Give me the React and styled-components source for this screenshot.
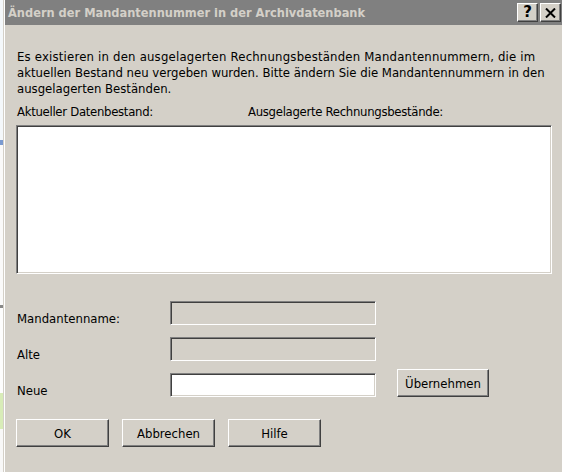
import React from 'react';
import styled, { createGlobalStyle } from 'styled-components';

const GlobalStyle = createGlobalStyle`
  html, body {
    margin: 0;
    padding: 0;
    background: #fff;
    overflow: hidden;
  }
  * {
    box-sizing: border-box;
  }
`;

const FONT = `'DejaVu Sans Condensed', 'DejaVu Sans', Tahoma, sans-serif`;

const Screen = styled.div`
  display: flex;
  width: 562px;
  height: 472px;
  font-family: ${FONT};
  font-stretch: condensed;
  font-size: 13px;
  color: #000;
`;

const Backdrop = styled.div`
  display: flex;
  flex-direction: column;
  width: 3px;
  background: #f4f8fb;
`;

const Patch = styled.div`
  height: ${(p) => p.h}px;
  background: ${(p) => p.color};
`;

const Window = styled.div`
  flex: 1;
  display: flex;
  flex-direction: column;
  min-width: 0;
  background: #d4d0c8;
  border-left: 1px solid #d4d0c8;
  box-shadow: inset 1px 0 #fff;
  padding-left: 1px;
`;

const TitleBar = styled.div`
  display: flex;
  align-items: center;
  height: 25px;
  padding: 0 1px 0 3px;
  background: #808080;
`;

const Title = styled.div`
  flex: 1;
  font-weight: bold;
  font-size: 12.7px;
  color: #d4d0c8;
  white-space: nowrap;
`;

const CaptionButton = styled.div`
  display: flex;
  align-items: center;
  justify-content: center;
  width: 21px;
  height: 19px;
  margin-left: 2px;
  background: #d4d0c8;
  border-top: 1px solid #fff;
  border-left: 1px solid #fff;
  border-right: 1px solid #404040;
  border-bottom: 1px solid #404040;
  box-shadow: inset -1px -1px #808080;
  font-family: 'DejaVu Sans', sans-serif;
  font-stretch: normal;
  font-weight: bold;
  font-size: 15px;
  line-height: 1;
`;

const Body = styled.div`
  display: flex;
  flex-direction: column;
  padding: 24px 11px 0 11px;
`;

const Intro = styled.div`
  padding-left: 1px;
  line-height: 16px;
`;

const Line = styled.div`
  white-space: nowrap;
  letter-spacing: ${(p) => p.track || 0}px;
`;

const ColumnHeads = styled.div`
  display: flex;
  margin-top: 7px;
  line-height: 16px;
  padding-left: 1px;
  letter-spacing: -0.3px;
`;

const ColumnHead = styled.div`
  width: ${(p) => p.w}px;
`;

const Sunken = styled.div`
  border-top: 1px solid #808080;
  border-left: 1px solid #808080;
  border-right: 1px solid #fff;
  border-bottom: 1px solid #fff;
  box-shadow: inset 1px 1px #404040, inset -1px -1px #d4d0c8;
  background: ${(p) => (p.disabled ? '#d4d0c8' : '#fff')};
`;

const ListBox = styled(Sunken)`
  width: 536px;
  height: 149px;
  margin-top: 5px;
`;

const Form = styled.div`
  display: grid;
  grid-template-columns: 154px 206px 113px;
  grid-template-rows: repeat(3, 24px);
  row-gap: 12px;
  margin-top: 27px;
`;

const Label = styled.div`
  align-self: end;
  line-height: 16px;
  padding-left: 1px;
  margin-bottom: -2px;
`;

const Field = styled(Sunken)`
  height: 24px;
`;

const Button = styled.div`
  display: flex;
  align-items: center;
  justify-content: center;
  width: ${(p) => p.w || 93}px;
  height: 28px;
  background: #d4d0c8;
  border-top: 1px solid #fff;
  border-left: 1px solid #fff;
  border-right: 1px solid #404040;
  border-bottom: 1px solid #404040;
  box-shadow: inset -1px -1px #808080;
`;

const ApplyButton = styled(Button)`
  grid-column: 3;
  grid-row: 3;
  align-self: end;
  justify-self: end;
`;

const ButtonRow = styled.div`
  display: flex;
  gap: 13px;
  margin-top: 22px;
`;

const CloseGlyph = () => (
  <svg width="11" height="10" viewBox="0 0 11 10">
    <path d="M1 0.5 L10 9.5 M10 0.5 L1 9.5" stroke="#000" strokeWidth="2" />
  </svg>
);

export default function App() {
  return (
    <>
      <GlobalStyle />
      <Screen>
        <Backdrop>
          <Patch h={140} color="#f4f8fb" />
          <Patch h={5} color="#7a9ad0" />
          <Patch h={160} color="#fafafa" />
          <Patch h={3} color="#888" />
          <Patch h={85} color="#fdfdfd" />
          <Patch h={36} color="#d8ecb8" />
          <Patch h={43} color="#f8f8f8" />
        </Backdrop>
        <Window>
          <TitleBar>
            <Title>Ändern der Mandantennummer in der Archivdatenbank</Title>
            <CaptionButton>?</CaptionButton>
            <CaptionButton>
              <CloseGlyph />
            </CaptionButton>
          </TitleBar>
          <Body>
            <Intro>
              <Line track={0.2}>
                Es existieren in den ausgelagerten Rechnungsbeständen
                Mandantennummern, die im
              </Line>
              <Line>
                aktuellen Bestand neu vergeben wurden. Bitte ändern Sie die
                Mandantennummern in den
              </Line>
              <Line>ausgelagerten Beständen.</Line>
            </Intro>
            <ColumnHeads>
              <ColumnHead w={231}>Aktueller Datenbestand:</ColumnHead>
              <ColumnHead>Ausgelagerte Rechnungsbestände:</ColumnHead>
            </ColumnHeads>
            <ListBox />
            <Form>
              <Label>Mandantenname:</Label>
              <Field disabled />
              <div />
              <Label>Alte</Label>
              <Field disabled />
              <div />
              <Label>Neue</Label>
              <Field />
              <ApplyButton w={92}>Übernehmen</ApplyButton>
            </Form>
            <ButtonRow>
              <Button>OK</Button>
              <Button>Abbrechen</Button>
              <Button>Hilfe</Button>
            </ButtonRow>
          </Body>
        </Window>
      </Screen>
    </>
  );
}
